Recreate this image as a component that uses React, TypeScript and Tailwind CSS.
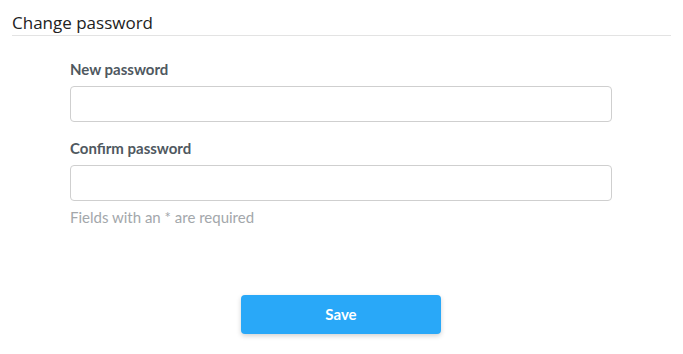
export default function App() {
  return (
    <div className="w-[683px] h-[354px] bg-white px-3 pt-[12px]">
      <h2 className="border-b border-[#e3e3e3] pb-[1px] text-[17px] leading-[22px] text-[#222] font-['Open_Sans',sans-serif]">
        Change password
      </h2>
      <form className="ml-[58px] mr-[59px] pt-[24px] font-['Lato',sans-serif]">
        <label className="block text-[15px] leading-[18px] font-bold text-[#4f5860]">New password</label>
        <input
          type="password"
          className="mt-[8px] block h-[36px] w-full rounded-[4px] border border-[#cfcfcf] bg-white"
        />
        <label className="mt-[17px] block text-[15px] leading-[18px] font-bold text-[#4f5860]">Confirm password</label>
        <input
          type="password"
          className="mt-[8px] block h-[36px] w-full rounded-[4px] border border-[#cfcfcf] bg-white"
        />
        <p className="mt-[7px] text-[15px] leading-[18px] text-[#a3a7ab]">Fields with an * are required</p>
        <div className="flex justify-center pt-[69px]">
          <button
            type="button"
            className="h-[39px] w-[200px] rounded-[4px] bg-[#29a8f8] text-[15px] font-bold text-white shadow-[0_2px_5px_rgba(0,0,0,0.18)]"
          >
            Save
          </button>
        </div>
      </form>
    </div>
  );
}
